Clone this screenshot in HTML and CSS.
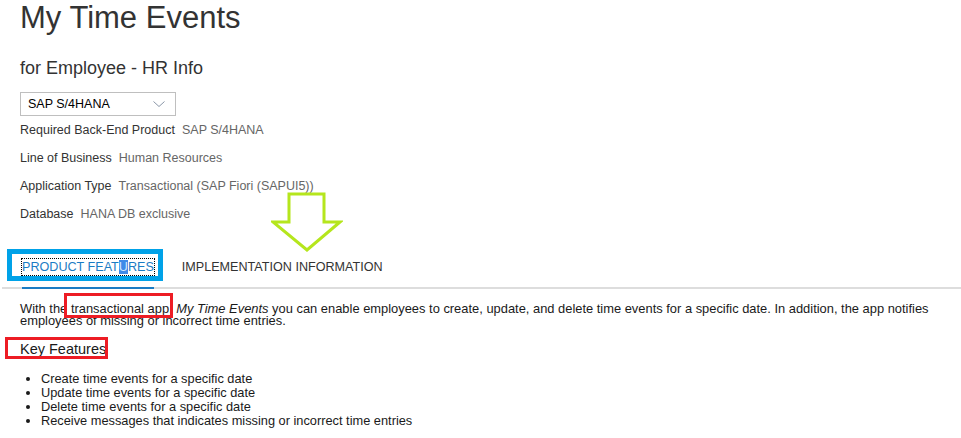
FILE: index.html
```html
<!DOCTYPE html>
<html>
<head>
  <title>My Time Events</title>
  <meta charset="UTF-8">
  <link rel="stylesheet" href="styles.css">
</head>
<body>
  <div class="page">
    <div class="header">
      <h1>My Time Events</h1>
      <h2>for Employee - HR Info</h2>

      <div class="product-select">
        <span>SAP S/4HANA</span>
        <svg class="chevron" width="12" height="6" viewBox="0 0 12 6">
          <polyline points="0.5,0.5 6,5.5 11.5,0.5" fill="none" stroke="#8a96a8" stroke-width="1"/>
        </svg>
      </div>

      <div class="facts">
        <div class="fact"><span class="fact-label">Required Back-End Product</span><span class="fact-value">SAP S/4HANA</span></div>
        <div class="fact"><span class="fact-label">Line of Business</span><span class="fact-value">Human Resources</span></div>
        <div class="fact"><span class="fact-label">Application Type</span><span class="fact-value">Transactional (SAP Fiori (SAPUI5))</span></div>
        <div class="fact"><span class="fact-label">Database</span><span class="fact-value">HANA DB exclusive</span></div>
      </div>
    </div>

    <!-- annotation arrow pointing at the tabs -->
    <svg class="hint-arrow" width="72" height="62" viewBox="0 0 72 62">
      <polygon points="18,2 53,2 53,30 69,30 36,58 2,30 18,30" fill="none" stroke="#b5e61d" stroke-width="3"/>
    </svg>

    <div class="tabs">
      <div class="tab active">
        <span class="tab-text">PRODUCT FEAT<span class="caret">U</span>RES</span>
        <span class="blue-box"></span>
      </div>
      <div class="tab">
        <span class="tab-text">IMPLEMENTATION INFORMATION</span>
      </div>
    </div>

    <div class="content">
      <p class="intro">With the <span class="red-mark">transactional app</span>, <em>My Time Events</em> you can enable employees to create, update, and delete time events for a specific date. In addition, the app notifies employees of missing or incorrect time entries.</p>

      <h3><span class="red-box">Key Features</span></h3>

      <ul class="features">
        <li>Create time events for a specific date</li>
        <li>Update time events for a specific date</li>
        <li>Delete time events for a specific date</li>
        <li>Receive messages that indicates missing or incorrect time entries</li>
      </ul>
    </div>
  </div>
</body>
</html>
```

FILE: styles.css
```css
:root {
  --title-color: #333333;
  --label-color: #333333;
  --value-color: #666666;
  --text-color: #1a1a1a;
  --link-blue: #1a7cc4;
  --tab-line: #dddddd;
  --note-red: #ed1c24;
  --note-blue: #00a2e8;
}

body {
  margin: 0;
  font-family: "Liberation Sans", Arial, sans-serif;
  background-color: #ffffff;
  color: var(--text-color);
}

.page {
  position: relative;
  width: 961px;
  height: 438px;
  overflow: hidden;
}

.header {
  padding-left: 20px;
}

h1 {
  margin: 0;
  font-size: 31px;
  line-height: 36px;
  font-weight: normal;
  color: var(--title-color);
}

h2 {
  margin: 20px 0 0 0;
  font-size: 18px;
  line-height: 24px;
  font-weight: normal;
  color: var(--title-color);
}

.product-select {
  margin-top: 12px;
  width: 156px;
  height: 24px;
  box-sizing: border-box;
  border: 1px solid #bfbfbf;
  padding: 0 10px 0 7px;
  display: flex;
  align-items: center;
  justify-content: space-between;
  font-size: 12.5px;
  color: #000000;
}

.chevron {
  display: block;
}

.fact {
  font-size: 12.5px;
  line-height: 28px;
}

.fact-label {
  color: var(--label-color);
  margin-right: 7px;
}

.fact-value {
  color: var(--value-color);
}

.hint-arrow {
  position: absolute;
  left: 271px;
  top: 192px;
}

/* Tabs */
.tabs {
  margin: 20px 0 0 2px;
  padding-left: 20px;
  display: flex;
  gap: 28px;
  border-bottom: 2px solid var(--tab-line);
}

.tab {
  position: relative;
  padding: 11px 0 12px 0;
  margin-bottom: -2px;
  border-bottom: 2px solid transparent;
  font-size: 12.6px;
  line-height: 16px;
  color: var(--label-color);
}

.tab.active {
  border-bottom-color: var(--link-blue);
  color: var(--link-blue);
}

.tab.active .tab-text {
  display: inline-block;
  outline: 1px dotted #000000;
}

.caret {
  background-color: #3f8ae8;
  color: #d6e8ff;
}

.blue-box {
  position: absolute;
  left: -15px;
  top: 1px;
  right: -9px;
  bottom: 6px;
  border: 5px solid var(--note-blue);
}

/* Product features text */
.content {
  padding: 0 20px;
}

.intro {
  margin: 14px 0 0 0;
  font-size: 12.9px;
  line-height: 12px;
}

.red-mark {
  position: relative;
}

.red-mark::after {
  content: "";
  position: absolute;
  left: -7px;
  right: -4px;
  top: -8px;
  bottom: -2px;
  border: 3px solid var(--note-red);
}

h3 {
  margin: 13px 0 0 0;
  font-size: 14.5px;
  line-height: 18px;
  font-weight: normal;
  color: var(--text-color);
}

.red-box {
  position: relative;
}

.red-box::after {
  content: "";
  position: absolute;
  left: -15px;
  right: -2px;
  top: -4px;
  bottom: -2px;
  border: 3px solid var(--note-red);
}

.features {
  margin: 14px 0 0 0;
  padding-left: 21px;
  font-size: 12.8px;
  line-height: 14px;
}
```
